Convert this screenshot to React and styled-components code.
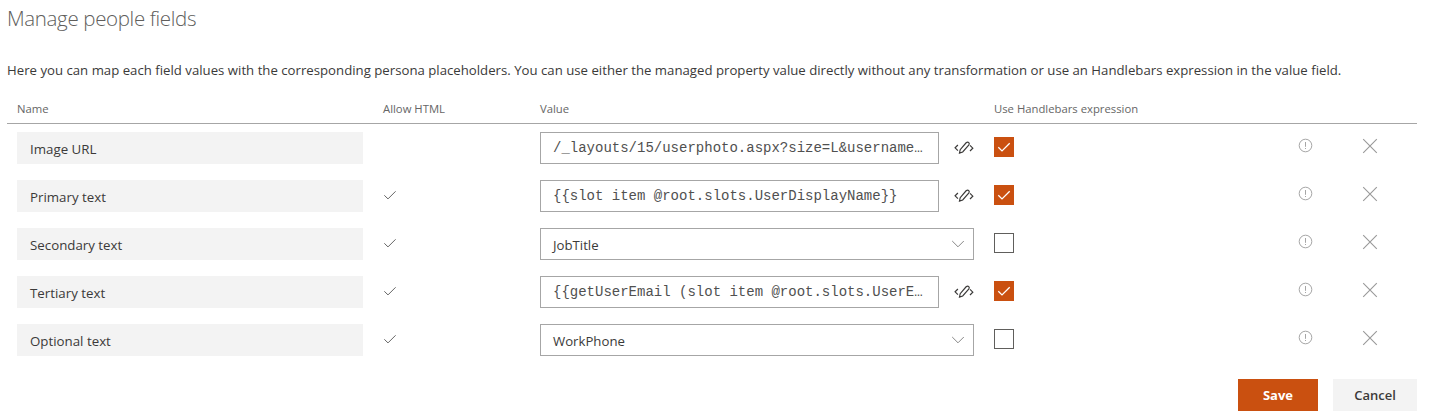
import React from "react";
import styled, { createGlobalStyle } from "styled-components";

const GlobalStyle = createGlobalStyle`
  * { box-sizing: border-box; }
  body {
    margin: 0;
    background: #fff;
    color: #3b3a39;
    font-family: "Open Sans", "Noto Sans", sans-serif;
  }
`;

const Panel = styled.main`
  width: 1429px;
  height: 420px;
  padding: 0 12px 0 7px;
  overflow: hidden;
`;

const Title = styled.h1`
  margin: 0;
  height: 58px;
  padding-top: 3px;
  font-size: 20.5px;
  line-height: 30px;
  font-weight: 300;
  letter-spacing: -0.35px;
  color: #605e5c;
`;

const Description = styled.p`
  margin: 0;
  height: 37px;
  padding-top: 2px;
  font-size: 13.2px;
  line-height: 20px;
  letter-spacing: 0.007px;
  white-space: nowrap;
`;

const Row = styled.div`
  display: grid;
  grid-template-columns: 366px 157px 454px 289px 65px 64px;
  height: 48px;
`;

const HeaderRow = styled(Row)`
  height: 29px;
  border-bottom: 1px solid #a6a6a6;
`;

const HeaderCell = styled.div`
  padding: 5px 10px 0;
  font-size: 11.3px;
  line-height: 17px;
  white-space: nowrap;
  color: #666;
`;

const Cell = styled.div`
  display: flex;
  padding: 8px 10px;
`;

const NameField = styled.div`
  flex: 1;
  height: 32px;
  padding: 2px 13px 0;
  background: #f3f3f3;
  font-size: 13.3px;
  line-height: 31px;
`;

const AllowCell = styled(Cell)`
  padding: 16px 10px;
`;

const Select = styled.div`
  display: flex;
  flex: 1;
  justify-content: space-between;
  height: 32px;
  padding: 1px 8px 0 12px;
  border: 1px solid #a6a6a6;
  font-size: 13.2px;
  line-height: 31px;

  svg { margin-top: 5px; }
`;

const ExpressionField = styled.div`
  flex: none;
  width: 399px;
  height: 32px;
  padding: 0 12px;
  border: 1px solid #a6a6a6;
  color: #505050;
  font-family: "Liberation Mono", monospace;
  font-size: 14px;
  line-height: 30px;
  white-space: pre;
`;

const EditorButton = styled.span`
  display: flex;
  flex: none;
  margin: 8px 0 0 14px;
`;

const Checkbox = styled.span`
  display: flex;
  width: 20px;
  height: 20px;
  margin-top: 5px;
  border: 1px solid ${(p) => (p.$checked ? "#ca5010" : "#605e5c")};
  background: ${(p) => (p.$checked ? "#ca5010" : "#fff")};
`;

const ActionCell = styled.div`
  display: flex;
  justify-content: center;
  padding-top: 14px;
`;

const Footer = styled.footer`
  display: flex;
  justify-content: flex-end;
  gap: 15px;
  padding: 15px 0 0;
`;

const Button = styled.button`
  width: ${(p) => (p.$primary ? 80 : 84)}px;
  height: 32px;
  padding: 0 0 1px;
  border: 0;
  background: ${(p) => (p.$primary ? "#ca5010" : "#f3f3f3")};
  color: ${(p) => (p.$primary ? "#fff" : "#3b3a39")};
  font: ${(p) => (p.$primary ? 700 : 600)} 13px "Open Sans", sans-serif;
`;

const AllowCheck = () => (
  <svg width="14" height="14" viewBox="0 0 14 14" fill="none" stroke="#666" strokeWidth="1">
    <path d="M1.3 7.3 L5 10.9 L12.6 3.3" />
  </svg>
);

const WhiteCheck = () => (
  <svg width="18" height="18" viewBox="0 0 18 18" fill="none" stroke="#fff" strokeWidth="1.3">
    <path d="M3.3 9.2 L7 12.9 L14.7 5.2" />
  </svg>
);

const Chevron = () => (
  <svg width="14" height="16" viewBox="0 0 14 16" fill="none" stroke="#888" strokeWidth="1">
    <path d="M1.2 6 L7 11.8 L12.8 6" />
  </svg>
);

const CodeEdit = () => (
  <svg width="22" height="16" viewBox="0 0 22 16" fill="none" stroke="#3b3a39" strokeWidth="1.2">
    <path d="M4.9 5 L2.1 7.8 L4.9 10.6" />
    <path d="M17 5.4 L19.8 8.2 L17 11" />
    <path d="M6.5 13 L7.2 9.7 L13.1 2.8 Q14.7 1.6 15.8 2.6 Q16.8 3.7 15.7 5.1 L9.7 12 Z" />
  </svg>
);

const Info = () => (
  <svg width="15" height="15" viewBox="0 0 15 15" fill="none" stroke="#a6a6a6">
    <circle cx="7.5" cy="7.5" r="6.3" />
    <path d="M7.5 4 V8.8 M7.5 10 V11" />
  </svg>
);

const Close = () => (
  <svg width="16" height="16" viewBox="0 0 16 16" fill="none" stroke="#999" strokeWidth="1.1">
    <path d="M1.2 1.2 L14.8 14.8 M14.8 1.2 L1.2 14.8" />
  </svg>
);

const fields = [
  { name: "Image URL", html: false, expression: true, value: "/_layouts/15/userphoto.aspx?size=L&username…" },
  { name: "Primary text", html: true, expression: true, value: "{{slot item @root.slots.UserDisplayName}}" },
  { name: "Secondary text", html: true, expression: false, value: "JobTitle" },
  { name: "Tertiary text", html: true, expression: true, value: "{{getUserEmail (slot item @root.slots.UserE…" },
  { name: "Optional text", html: true, expression: false, value: "WorkPhone" },
];

const FieldRow = ({ field }) => (
  <Row>
    <Cell><NameField>{field.name}</NameField></Cell>
    <AllowCell>{field.html && <AllowCheck />}</AllowCell>
    <Cell>
      {field.expression ? (
        <>
          <ExpressionField>{field.value}</ExpressionField>
          <EditorButton><CodeEdit /></EditorButton>
        </>
      ) : (
        <Select>{field.value}<Chevron /></Select>
      )}
    </Cell>
    <Cell>
      <Checkbox $checked={field.expression}>{field.expression && <WhiteCheck />}</Checkbox>
    </Cell>
    <ActionCell><Info /></ActionCell>
    <ActionCell><Close /></ActionCell>
  </Row>
);

export default function App() {
  return (
    <>
      <GlobalStyle />
      <Panel>
        <Title>Manage people fields</Title>
        <Description>
          Here you can map each field values with the corresponding persona placeholders. You can use either the managed property value directly without any transformation or use an Handlebars expression in the value field.
        </Description>
        <HeaderRow>
          <HeaderCell>Name</HeaderCell>
          <HeaderCell>Allow HTML</HeaderCell>
          <HeaderCell>Value</HeaderCell>
          <HeaderCell>Use Handlebars expression</HeaderCell>
        </HeaderRow>
        {fields.map((field) => <FieldRow key={field.name} field={field} />)}
        <Footer>
          <Button $primary>Save</Button>
          <Button>Cancel</Button>
        </Footer>
      </Panel>
    </>
  );
}
